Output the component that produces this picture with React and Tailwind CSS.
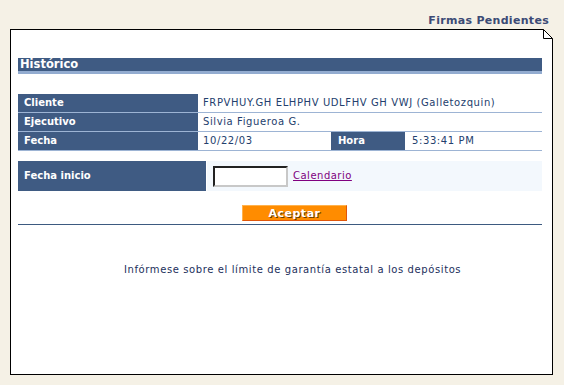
import React from "react";

function Row({ label, children }) {
  return (
    <div className="flex h-[19px] border-b border-[#9db4d4]">
      <div className="w-[180px] bg-[#3f5b83] pl-[6px] flex items-center font-bold text-white">
        {label}
      </div>
      <div className="flex-1 flex items-center pl-[5px] tracking-[0.6px]">
        {children}
      </div>
    </div>
  );
}

export default function App() {
  return (
    <div className="min-h-screen bg-[#f5f1e6] font-['DejaVu_Sans',sans-serif] text-[10px] leading-none">
      <div className="h-[29px] flex items-end justify-end pr-[15px] pb-[3px]">
        <span className="text-[11px] font-bold tracking-[0.3px] text-[#3b4a75]">Firmas Pendientes</span>
      </div>

      <div className="relative ml-[10px] w-[543px] h-[346px] border border-black bg-white pl-[7px] pr-[10px] pt-[28px]">
        {/* doblez de la esquina */}
        <svg className="absolute -top-px -right-px" width="11" height="11" viewBox="0 0 11 11">
          <polygon points="1,0 11,0 11,10" fill="#f5f1e6" />
          <path d="M1.5 0.5 L10.5 9.5 M1.5 0.5 V9.5 H10.5" stroke="#000" strokeWidth="1" fill="none" />
        </svg>

        <div className="h-[13px] bg-[#3f5b83] border-b-[3px] border-[#93acd0] box-content flex items-center">
          <span className="pl-[2px] pt-px text-[11.5px] font-bold text-white">Histórico</span>
        </div>

        <div className="mt-[20px] text-[#23406d]">
          <Row label="Cliente">FRPVHUY.GH ELHPHV UDLFHV GH VWJ (Galletozquin)</Row>
          <Row label="Ejecutivo">Silvia Figueroa G.</Row>
          <div className="flex h-[19px] border-b border-[#9db4d4]">
            <div className="w-[180px] bg-[#3f5b83] pl-[6px] flex items-center font-bold text-white">Fecha</div>
            <div className="w-[133px] flex items-center pl-[5px] tracking-[0.6px]">10/22/03</div>
            <div className="w-[74px] bg-[#3f5b83] pl-[7px] flex items-center font-bold text-white">Hora</div>
            <div className="flex-1 flex items-center pl-[7px] tracking-[0.6px]">5:33:41 PM</div>
          </div>
        </div>

        <div className="mt-[10px] flex h-[30px]">
          <div className="w-[188px] bg-[#3f5b83] pl-[6px] flex items-center font-bold text-white">Fecha inicio</div>
          <div className="flex-1 ml-px bg-[#f3f8fd] flex items-center pl-[6px]">
            <input
              type="text"
              className="w-[75px] h-[21px] bg-white border-2 border-t-[#222] border-l-[#222] border-b-[#c8c8c8] border-r-[#c8c8c8] outline-none"
            />
            <a href="#" className="ml-[5px] text-[#800080] underline tracking-[0.5px]">Calendario</a>
          </div>
        </div>

        <div className="mt-[14px] pl-[224px]">
          <button className="w-[105px] h-[16px] bg-[#ff8c00] border border-t-[#ffb24d] border-l-[#ffb24d] border-b-[#e0560a] border-r-[#e0560a] text-white font-bold text-[11px] tracking-[0.5px] [text-shadow:1px_1px_0_#6b3a00] flex items-center justify-center">
            Aceptar
          </button>
        </div>

        <div className="mt-[3px] h-px bg-[#3d5a80]" />

        <div className="mt-[40px] pl-[106px] text-[#1c2f5c] tracking-[0.6px]">
          Infórmese sobre el límite de garantía estatal a los depósitos
        </div>
      </div>
    </div>
  );
}
